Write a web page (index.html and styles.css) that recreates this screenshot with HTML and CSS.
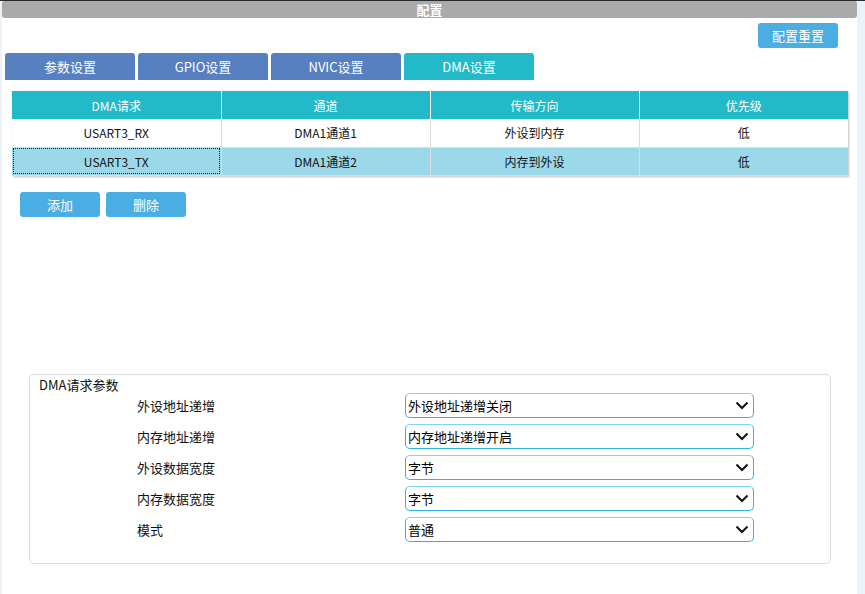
FILE: index.html
```html
<!DOCTYPE html>
<html lang="zh-CN">
<head>
  <meta charset="UTF-8">
  <title>配置</title>
  <link rel="stylesheet" href="styles.css">
</head>
<body>
  <div class="panel">
    <div class="titlebar">配置</div>

    <div class="toolbar">
      <button class="btn">配置重置</button>
    </div>

    <div class="tabs">
      <div class="tab">参数设置</div>
      <div class="tab">GPIO设置</div>
      <div class="tab">NVIC设置</div>
      <div class="tab active">DMA设置</div>
    </div>

    <table class="dma-table">
      <thead>
        <tr>
          <th>DMA请求</th>
          <th>通道</th>
          <th>传输方向</th>
          <th>优先级</th>
        </tr>
      </thead>
      <tbody>
        <tr>
          <td>USART3_RX</td>
          <td>DMA1通道1</td>
          <td>外设到内存</td>
          <td>低</td>
        </tr>
        <tr class="selected">
          <td class="focused">USART3_TX</td>
          <td>DMA1通道2</td>
          <td>内存到外设</td>
          <td>低</td>
        </tr>
      </tbody>
    </table>

    <div class="actions">
      <button class="btn">添加</button>
      <button class="btn">删除</button>
    </div>

    <div class="group">
      <div class="group-title">DMA请求参数</div>
      <div class="form">
        <label>外设地址递增</label>
        <div class="select-wrap">
          <select><option>外设地址递增关闭</option></select>
          <svg class="chevron" width="14" height="9" viewBox="0 0 14 9"><path d="M1.5 1.5 L7 7 L12.5 1.5" fill="none" stroke="#111" stroke-width="2"/></svg>
        </div>

        <label>内存地址递增</label>
        <div class="select-wrap">
          <select><option>内存地址递增开启</option></select>
          <svg class="chevron" width="14" height="9" viewBox="0 0 14 9"><path d="M1.5 1.5 L7 7 L12.5 1.5" fill="none" stroke="#111" stroke-width="2"/></svg>
        </div>

        <label>外设数据宽度</label>
        <div class="select-wrap">
          <select><option>字节</option></select>
          <svg class="chevron" width="14" height="9" viewBox="0 0 14 9"><path d="M1.5 1.5 L7 7 L12.5 1.5" fill="none" stroke="#111" stroke-width="2"/></svg>
        </div>

        <label>内存数据宽度</label>
        <div class="select-wrap">
          <select><option>字节</option></select>
          <svg class="chevron" width="14" height="9" viewBox="0 0 14 9"><path d="M1.5 1.5 L7 7 L12.5 1.5" fill="none" stroke="#111" stroke-width="2"/></svg>
        </div>

        <label>模式</label>
        <div class="select-wrap">
          <select><option>普通</option></select>
          <svg class="chevron" width="14" height="9" viewBox="0 0 14 9"><path d="M1.5 1.5 L7 7 L12.5 1.5" fill="none" stroke="#111" stroke-width="2"/></svg>
        </div>
      </div>
    </div>
  </div>
</body>
</html>
```

FILE: styles.css
```css
:root {
  --tab: #5680c0;
  --teal: #22b9c9;
  --btn: #4aaee3;
  --row-sel: #9bd9ea;
  --line: #dcdcdc;
  --page: #eaf3f6;
}
* {
  box-sizing: border-box;
  margin: 0;
  padding: 0;
}
body {
  background-color: var(--page);
  border-top: 1px solid #2a2a2a;
  font-family: "Noto Sans CJK SC", "Noto Sans", sans-serif;
  font-size: 13px;
  color: #111;
  height: 594px;
  overflow: hidden;
}
.panel {
  margin-left: 2px;
  width: 855px;
  height: 593px;
  background-color: #fff;
}
.titlebar {
  height: 17px;
  line-height: 17px;
  background-color: #aaaaaa;
  border-radius: 2px 2px 3px 3px;
  color: #fff;
  font-weight: bold;
  text-align: center;
  font-size: 13px;
}
.toolbar {
  display: flex;
  justify-content: flex-end;
  padding: 5px 19px 0 0;
}
.btn {
  width: 80px;
  height: 25px;
  border: none;
  border-radius: 3px;
  background-color: var(--btn);
  color: #fff;
  font-family: inherit;
  font-size: 13px;
  cursor: pointer;
}
.tabs {
  display: flex;
  gap: 3px;
  margin-top: 5px;
  padding-left: 3px;
}
.tab {
  width: 130px;
  height: 27px;
  line-height: 27px;
  text-align: center;
  color: #fff;
  background-color: var(--tab);
  border-radius: 3px 3px 0 0;
}
.tab.active {
  background-color: var(--teal);
}
.dma-table {
  margin: 11px 0 0 10px;
  width: 836px;
  border-collapse: collapse;
  table-layout: fixed;
  box-shadow: 1px 1px 2px rgba(0, 0, 0, 0.25);
  font-size: 12px;
}
.dma-table th {
  height: 28px;
  background-color: var(--teal);
  color: #fff;
  font-weight: normal;
  font-size: 12px;
  border-left: 1px solid #fff;
}
.dma-table th:first-child {
  border-left: none;
}
.dma-table td {
  height: 28px;
  text-align: center;
  border: 1px solid var(--line);
  border-top: none;
}
.dma-table td:first-child {
  border-left: none;
}
.dma-table td:last-child {
  border-right: none;
}
.dma-table tr.selected td {
  background-color: var(--row-sel);
}
.dma-table td.focused {
  outline: 1px dotted #600;
  outline-offset: -2px;
}
.actions {
  display: flex;
  gap: 6px;
  margin-top: 16px;
  padding-left: 18px;
}
.group {
  margin: 157px 0 0 27px;
  width: 802px;
  height: 190px;
  border: 1px solid var(--line);
  border-radius: 5px;
}
.group-title {
  display: inline-block;
  margin: -2px 0 0 6px;
  padding: 0 4px 0 3px;
  background-color: #fff;
  line-height: 17px;
  font-size: 13px;
}
.form {
  display: grid;
  grid-template-columns: 268px 349px;
  grid-auto-rows: 25px;
  row-gap: 6px;
  align-items: center;
  margin-top: -1px;
  padding-left: 107px;
}
.form label {
  font-size: 13px;
}
.select-wrap {
  position: relative;
  height: 25px;
}
.select-wrap select {
  appearance: none;
  width: 100%;
  height: 25px;
  border: 1px solid #2fb2e6;
  border-top-color: #7fd3f3;
  border-radius: 5px;
  background-color: #fff;
  padding-left: 2px;
  font-family: inherit;
  font-size: 13px;
  color: #000;
}
.chevron {
  position: absolute;
  right: 5px;
  top: 8px;
  pointer-events: none;
}
```
